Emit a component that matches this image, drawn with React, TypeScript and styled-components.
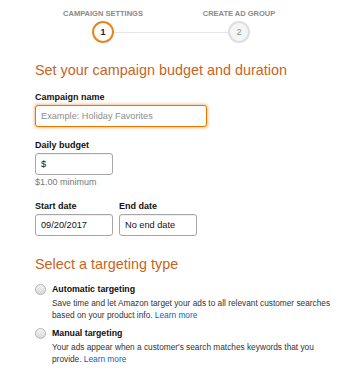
import React from "react";
import styled, { createGlobalStyle } from "styled-components";

const GlobalStyle = createGlobalStyle`
  html, body {
    margin: 0;
    padding: 0;
    background: #fff;
  }
  body {
    font-family: "Liberation Sans", Arial, sans-serif;
    color: #111;
  }
`;

const Page = styled.div`
  width: 349px;
  height: 381px;
  padding: 9px 0 0 35px;
  box-sizing: border-box;
  overflow: hidden;
`;

const Stepper = styled.div`
  display: grid;
  grid-template-columns: 136px 136px;
  row-gap: 2px;
`;

const StepLabel = styled.div`
  text-align: center;
  font-size: 7.5px;
  font-weight: 700;
  color: #8a8a8a;
  text-transform: uppercase;
  line-height: 10px;
`;

const Track = styled.div`
  grid-column: 1 / -1;
  display: flex;
  align-items: center;
  padding: 0 57px;
`;

const StepCircle = styled.div<{ $active?: boolean }>`
  width: 22px;
  height: 22px;
  box-sizing: border-box;
  border-radius: 50%;
  display: flex;
  align-items: center;
  justify-content: center;
  font-size: 9px;
  border: 2px solid ${({ $active }) => ($active ? "#e8851f" : "#dedede")};
  background: ${({ $active }) => ($active ? "#fff" : "#f4f5f7")};
  color: ${({ $active }) => ($active ? "#222" : "#8f8f8f")};
  font-weight: ${({ $active }) => ($active ? 700 : 400)};
`;

const Connector = styled.div`
  flex: 1;
  height: 1px;
  background: #e6e6e6;
`;

const Heading = styled.h2`
  margin: 0;
  font-weight: 400;
  font-size: 14.4px;
  color: #c8641c;
  line-height: 17px;
`;

const Section = styled.section<{ $top: number }>`
  margin-top: ${({ $top }) => $top}px;
`;

const Field = styled.div<{ $top?: number }>`
  display: flex;
  flex-direction: column;
  margin-top: ${({ $top }) => $top ?? 0}px;
`;

const Label = styled.label`
  font-size: 9px;
  font-weight: 700;
  color: #111;
  line-height: 11px;
  margin-bottom: 2px;
`;

const Input = styled.input<{ $w: number; $focus?: boolean }>`
  width: ${({ $w }) => $w}px;
  height: 22px;
  box-sizing: border-box;
  border-radius: 3px;
  border: 1px solid ${({ $focus }) => ($focus ? "#e77600" : "#a6a6a6")};
  box-shadow: ${({ $focus }) =>
    $focus ? "0 0 3px 1px rgba(228, 121, 17, 0.45)" : "inset 0 1px 0 rgba(0,0,0,0.06)"};
  padding: 0 5px;
  font-family: "Liberation Sans", Arial, sans-serif;
  font-size: 9.2px;
  color: #111;
  outline: none;
  &::placeholder {
    color: #8d8d8d;
  }
`;

const Hint = styled.div`
  font-size: 9px;
  color: #777;
  margin-top: 2px;
  line-height: 11px;
`;

const DateRow = styled.div`
  display: flex;
  gap: 6px;
  margin-top: 13px;
`;

const Options = styled.div`
  display: flex;
  flex-direction: column;
  gap: 6px;
  margin-top: 10px;
`;

const Option = styled.div`
  display: grid;
  grid-template-columns: 17px 1fr;
  align-items: start;
`;

const Radio = styled.span`
  width: 11px;
  height: 11px;
  box-sizing: border-box;
  margin-top: 1px;
  border-radius: 50%;
  border: 1px solid #b3b3b3;
  background: linear-gradient(#f4f4f4, #d9d9d9);
`;

const OptionTitle = styled.div`
  font-size: 8.8px;
  font-weight: 700;
  color: #111;
  line-height: 12px;
`;

const OptionText = styled.div`
  grid-column: 2;
  font-size: 8.3px;
  color: #333;
  line-height: 11.5px;
  margin-top: 3px;
  width: 285px;
`;

const Link = styled.a`
  color: #0066c0;
  text-decoration: none;
`;

export default function App() {
  return (
    <>
      <GlobalStyle />
      <Page>
        <Stepper>
          <StepLabel>Campaign Settings</StepLabel>
          <StepLabel>Create Ad Group</StepLabel>
          <Track>
            <StepCircle $active>1</StepCircle>
            <Connector />
            <StepCircle>2</StepCircle>
          </Track>
        </Stepper>

        <Section $top={19}>
          <Heading>Set your campaign budget and duration</Heading>
          <Field $top={13}>
            <Label>Campaign name</Label>
            <Input $w={172} $focus placeholder="Example: Holiday Favorites" />
          </Field>
          <Field $top={13}>
            <Label>Daily budget</Label>
            <Input $w={78} defaultValue="$" />
            <Hint>$1.00 minimum</Hint>
          </Field>
          <DateRow>
            <Field>
              <Label>Start date</Label>
              <Input $w={78} defaultValue="09/20/2017" />
            </Field>
            <Field>
              <Label>End date</Label>
              <Input $w={78} defaultValue="No end date" />
            </Field>
          </DateRow>
        </Section>

        <Section $top={20}>
          <Heading>Select a targeting type</Heading>
          <Options>
            <Option>
              <Radio />
              <OptionTitle>Automatic targeting</OptionTitle>
              <OptionText>
                Save time and let Amazon target your ads to all relevant customer searches
                based on your product info. <Link href="#">Learn more</Link>
              </OptionText>
            </Option>
            <Option>
              <Radio />
              <OptionTitle>Manual targeting</OptionTitle>
              <OptionText>
                Your ads appear when a customer's search matches keywords that you provide.{" "}
                <Link href="#">Learn more</Link>
              </OptionText>
            </Option>
          </Options>
        </Section>
      </Page>
    </>
  );
}
